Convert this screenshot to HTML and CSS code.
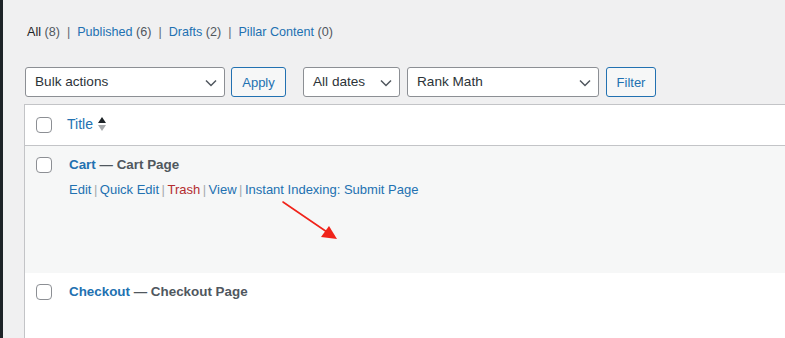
FILE: index.html
```html
<!DOCTYPE html>
<html lang="en">
<head>
    <meta charset="UTF-8">
    <title>Pages</title>
    <link rel="stylesheet" href="styles.css">
</head>
<body>
<div class="admin">
    <div class="admin__menu"></div>
    <div class="admin__content">

      <ul class="subsubsub">
        <li class="current">All <span class="count">(8)</span></li>
        <li class="sep">|</li>
        <li><a href="#">Published <span class="count">(6)</span></a></li>
        <li class="sep">|</li>
        <li><a href="#">Drafts <span class="count">(2)</span></a></li>
        <li class="sep">|</li>
        <li><a href="#">Pillar Content <span class="count">(0)</span></a></li>
      </ul>

      <div class="tablenav">
        <div class="tablenav__group">
          <div class="select select--bulk">Bulk actions
            <svg class="select__arrow" width="12" height="8" viewBox="0 0 12 8"><path d="M1 1.5 L6 6.5 L11 1.5" fill="none" stroke="#50575e" stroke-width="1.5"/></svg>
          </div>
          <button class="button">Apply</button>
        </div>
        <div class="tablenav__group">
          <div class="select select--dates">All dates
            <svg class="select__arrow" width="12" height="8" viewBox="0 0 12 8"><path d="M1 1.5 L6 6.5 L11 1.5" fill="none" stroke="#50575e" stroke-width="1.5"/></svg>
          </div>
          <div class="select select--seo">Rank Math
            <svg class="select__arrow" width="12" height="8" viewBox="0 0 12 8"><path d="M1 1.5 L6 6.5 L11 1.5" fill="none" stroke="#50575e" stroke-width="1.5"/></svg>
          </div>
          <button class="button button--filter">Filter</button>
        </div>
      </div>

      <div class="posts">
        <div class="posts__head">
          <span class="check"></span>
          <a class="posts__sort" href="#">Title</a>
          <span class="sort-arrows">
            <span class="sort-arrows__up"></span>
            <span class="sort-arrows__down"></span>
          </span>
        </div>

        <div class="posts__row posts__row--alt">
          <span class="check"></span>
          <div class="posts__title">
            <strong><a href="#">Cart</a> — Cart Page</strong>
            <div class="row-actions">
              <a href="#">Edit</a><span class="sep">|</span><a href="#">Quick Edit</a><span class="sep">|</span><a class="trash" href="#">Trash</a><span class="sep">|</span><a href="#">View</a><span class="sep">|</span><a href="#">Instant Indexing: Submit Page</a>
            </div>
          </div>
          <svg class="pointer" width="70" height="50" viewBox="0 0 70 50">
            <path d="M3 3 L47 33" stroke="#f0231a" stroke-width="1.6" stroke-linecap="round"/>
            <path d="M57 40 L41 38 L49 27 Z" fill="#f0231a"/>
          </svg>
        </div>

        <div class="posts__row">
          <span class="check"></span>
          <div class="posts__title">
            <strong><a href="#">Checkout</a> — Checkout Page</strong>
          </div>
        </div>
      </div>

    </div>
</div>
</body>
</html>
```

FILE: styles.css
```css
html, body { height: 100%; }
body {
  margin: 0;
  background: #f0f0f1;
  color: #3c434a;
  font-family: "Liberation Sans", Arial, sans-serif;
  font-size: 13px;
  overflow: hidden;
}
a { color: #2271b1; text-decoration: none; }

.admin { display: flex; min-height: 100%; }
.admin__menu { width: 3px; background: #1d2327; flex-shrink: 0; }
.admin__content { flex: 1; padding-left: 21px; min-width: 0; }

/* status links */
.subsubsub {
  list-style: none;
  display: flex;
  gap: 7px;
  margin: 19px 0 0 3px;
  padding: 0;
  line-height: 26px;
  font-size: 12.6px;
  color: #646970;
}
.subsubsub .current { color: #1d2327; }
.subsubsub .count { color: #50575e; }
.subsubsub .sep { color: #646970; }

/* filters */
.tablenav {
  display: flex;
  gap: 17px;
  margin: 22px 0 0 1px;
  height: 30px;
}
.tablenav__group { display: flex; gap: 6px; }
.tablenav__group + .tablenav__group { gap: 7px; }
.select {
  box-sizing: border-box;
  position: relative;
  height: 30px;
  line-height: 28px;
  padding: 0 24px 0 9px;
  border: 1px solid #8c8f94;
  border-radius: 3px;
  background: #fff;
  color: #2c3338;
  font-size: 13.6px;
}
.select--bulk { width: 200px; }
.select--dates { width: 97px; }
.select--seo { width: 192px; }
.select__arrow {
  position: absolute;
  right: 7px;
  top: 11px;
}
.button {
  box-sizing: border-box;
  height: 30px;
  padding: 0;
  border: 1px solid #2271b1;
  border-radius: 3px;
  background: #f6f7f7;
  color: #2271b1;
  font: inherit;
  font-size: 13px;
  width: 55px;
}
.button--filter { width: 50px; }

/* list table */
.posts {
  margin-top: 7px;
  border: 1px solid #c3c4c7;
  border-right: 0;
  background: #fff;
  min-height: 300px;
}
.posts__head {
  display: flex;
  align-items: center;
  height: 40px;
  border-bottom: 1px solid #c3c4c7;
  padding-left: 11px;
}
.posts__sort { font-size: 14px; margin: 0 0 3px 15px; }
.check {
  box-sizing: border-box;
  width: 16px;
  height: 16px;
  border: 1px solid #8c8f94;
  border-radius: 4px;
  background: #fff;
  flex-shrink: 0;
}
.sort-arrows {
  display: flex;
  flex-direction: column;
  gap: 2px;
  margin: 0 0 2px 5px;
}
.sort-arrows__up, .sort-arrows__down {
  width: 0;
  height: 0;
  border-left: 4.5px solid transparent;
  border-right: 4.5px solid transparent;
}
.sort-arrows__up { border-bottom: 6px solid #1d2327; }
.sort-arrows__down { border-top: 6px solid #a7aaad; }

.posts__row {
  position: relative;
  display: flex;
  align-items: flex-start;
  padding: 11px 0 0 11px;
  height: 116px;
}
.posts__row--alt { background: #f6f7f7; }
.posts__title { margin-left: 17px; margin-top: -2px; }
.posts__title strong { font-size: 13.4px; color: #50575e; line-height: 20px; }
.row-actions {
  margin-top: 5px;
  line-height: 20px;
  color: #a7aaad;
}
.row-actions .sep { margin: 0 2.5px; }
.row-actions .trash { color: #b32d2e; }

.pointer { position: absolute; left: 255px; top: 53px; }
```
